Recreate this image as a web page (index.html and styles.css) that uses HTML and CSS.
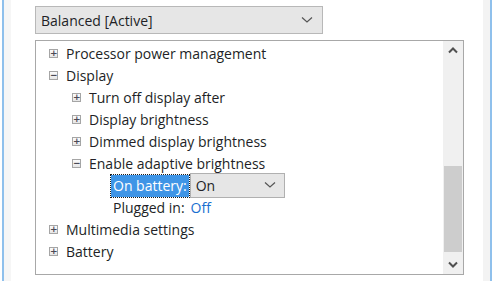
FILE: index.html
```html
<!DOCTYPE html>
<html>
<head>
<meta charset="utf-8">
<link rel="stylesheet" href="styles.css">
</head>
<body>
<div class="window">
  <div class="edge-left"></div>
  <div class="content">
    <div class="combo">
      <span class="combo-text">Balanced [Active]</span>
      <svg class="chev" width="12" height="8" viewBox="0 0 12 8"><path d="M1 1.5 L6 6 L11 1.5" fill="none" stroke="#555" stroke-width="1.2"/></svg>
    </div>
    <div class="tree">
      <div class="tree-list">
        <div class="row lvl1"><span class="exp">+</span><span class="label">Processor power management</span></div>
        <div class="row lvl1"><span class="exp">−</span><span class="label">Display</span></div>
        <div class="row lvl2"><span class="exp">+</span><span class="label">Turn off display after</span></div>
        <div class="row lvl2"><span class="exp">+</span><span class="label">Display brightness</span></div>
        <div class="row lvl2"><span class="exp">+</span><span class="label">Dimmed display brightness</span></div>
        <div class="row lvl2"><span class="exp">−</span><span class="label">Enable adaptive brightness</span></div>
        <div class="row lvl3">
          <span class="sel-label">On battery:</span>
          <div class="mini-combo"><span>On</span>
            <svg class="chev" width="12" height="8" viewBox="0 0 12 8"><path d="M1 1.5 L6 6 L11 1.5" fill="none" stroke="#555" stroke-width="1.2"/></svg>
          </div>
        </div>
        <div class="row lvl3 plug"><span class="label">Plugged in:</span><span class="value">Off</span></div>
        <div class="row lvl1"><span class="exp">+</span><span class="label">Multimedia settings</span></div>
        <div class="row lvl1"><span class="exp">+</span><span class="label">Battery</span></div>
      </div>
      <div class="scrollbar">
        <div class="arrow">
          <svg width="10" height="7" viewBox="0 0 10 7"><path d="M1 5.5 L5 1.5 L9 5.5" fill="none" stroke="#505050" stroke-width="2"/></svg>
        </div>
        <div class="track">
          <div class="thumb"></div>
        </div>
        <div class="arrow">
          <svg width="10" height="7" viewBox="0 0 10 7"><path d="M1 1.5 L5 5.5 L9 1.5" fill="none" stroke="#505050" stroke-width="2"/></svg>
        </div>
      </div>
    </div>
  </div>
  <div class="edge-right"></div>
</div>
</body>
</html>
```

FILE: styles.css
```css
html, body {
  margin: 0;
  padding: 0;
  background: #ffffff;
}
body {
  font-family: "Open Sans", "Noto Sans", sans-serif;
  font-size: 14px;
  color: #221f26;
}
.window {
  width: 500px;
  height: 281px;
  display: flex;
  overflow: hidden;
}
.edge-left {
  width: 7px;
  margin-left: 2px;
  border-left: 2px solid #8fc0ec;
  background: #f6f6f6;
}
.content {
  flex: 1;
  padding-left: 24px;
  padding-top: 6px;
}
.edge-right {
  width: 7px;
  margin-right: 8px;
  background: #f3f3f3;
  border-right: 2px solid #8fc0ec;
}
.combo {
  height: 26px;
  border: 1px solid #b8b8b8;
  background: #e6e6e6;
  display: flex;
  align-items: center;
  justify-content: space-between;
  padding: 0 9px 0 5px;
  width: 272px;
}
.chev {
  display: block;
}
.tree {
  margin-top: 6px;
  width: 427px;
  height: 233px;
  border: 1px solid #a8a8a8;
  display: flex;
}
.tree-list {
  flex: 1;
  padding-top: 1px;
}
.row {
  height: 22px;
  display: flex;
  align-items: center;
  white-space: nowrap;
}
.lvl1 { padding-left: 13px; }
.lvl2 { padding-left: 36px; }
.lvl3 { padding-left: 75px; }
.exp {
  width: 7px;
  height: 7px;
  border: 1px solid #a5a5a5;
  background: linear-gradient(#fbfbfb, #e6e6e6);
  font-size: 9px;
  line-height: 7px;
  text-align: center;
  color: #4a4a55;
  margin-right: 8px;
  font-family: "DejaVu Sans", sans-serif;
  font-weight: bold;
}
.sel-label {
  background: #3f95e6;
  color: #ffffff;
  outline: 1px dotted #1a1a1a;
  height: 22px;
  line-height: 22px;
  padding: 0 2px 0 2px;
  margin-top: 1px;
}
.mini-combo {
  margin-left: 1px;
  width: 80px;
  height: 23px;
  border: 1px solid #b0b0b0;
  background: #e6e6e6;
  display: flex;
  align-items: center;
  justify-content: space-between;
  padding: 0 8px 0 5px;
}
.plug .label { margin-left: 2px; }
.value {
  color: #1a6fd0;
  margin-left: 6px;
}
.scrollbar {
  width: 20px;
  background: #f0f0f0;
  display: flex;
  flex-direction: column;
}
.arrow {
  height: 19px;
  display: flex;
  align-items: center;
  justify-content: center;
}
.track {
  flex: 1;
  display: flex;
  flex-direction: column;
  justify-content: flex-end;
  padding-bottom: 3px;
}
.thumb {
  height: 86px;
  margin: 0 1px;
  background: #cdcdcd;
}
```
